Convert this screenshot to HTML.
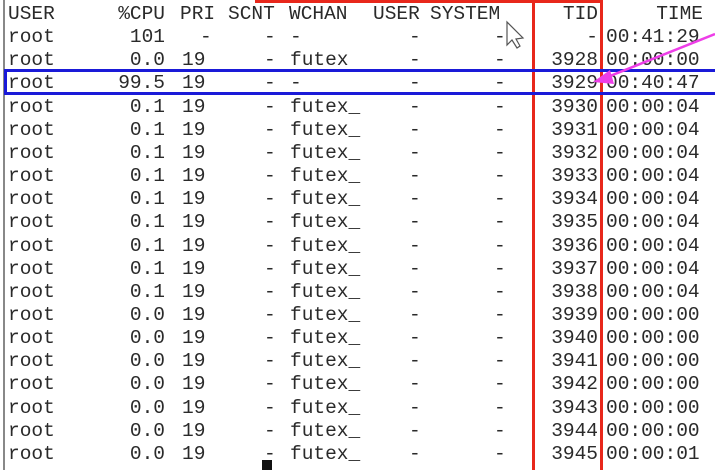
<!DOCTYPE html>
<html><head><meta charset="utf-8"><style>
body{margin:0;width:715px;height:470px;background:#fff;overflow:hidden;position:relative;font-family:"Liberation Mono",monospace;font-size:19.5px;color:#2a2a2a}
.r{position:absolute;left:0;height:23px;width:715px}
.r span{position:absolute;top:0;line-height:23px;white-space:pre}
.a{text-align:right}
</style></head><body>
<div style="position:absolute;left:3px;top:0;width:2px;height:470px;background:#888"></div>
<div id="rows"></div>
<script>
const rows=[["USER","%CPU","PRI","SCNT","WCHAN","USER","SYSTEM","TID","TIME"],
["root","101","-","-","-","-","-","-","00:41:29"],
["root","0.0","19","-","futex","-","-","3928","00:00:00"],
["root","99.5","19","-","-","-","-","3929","00:40:47"]];
for(let i=3930;i<=3945;i++){rows.push(["root",i<=3938?"0.1":"0.0","19","-","futex_","-","-",String(i),i==3945?"00:00:01":(i<=3938?"00:00:04":"00:00:00")]);}
let h="";
rows.forEach((r,k)=>{const y=3+k*23.15;const hd=k==0;
h+=`<div class="r" style="top:${y}px">
<span style="left:8px">${r[0]}</span>
<span class="a" style="right:${715-165}px">${r[1]}</span>
<span style="left:${hd?180:(r[2]=="-"?200:182)}px">${r[2]}</span>
<span style="left:${hd?228:264}px">${r[3]}</span>
<span style="left:${hd?289:290}px">${r[4]}</span>
<span style="left:${hd?373:409}px">${r[5]}</span>
<span style="left:${hd?430:494}px">${r[6]}</span>
<span class="a" style="right:${715-598}px">${r[7]}</span>
<span ${hd?'class="a" style="right:12px"':'style="left:606px"'}>${r[8]}</span></div>`;});
document.getElementById("rows").innerHTML=h;
</script>
<div style="position:absolute;left:262px;top:460px;width:10px;height:10px;background:#111"></div>
<div style="position:absolute;left:255px;top:0;width:347px;height:3px;background:#e8271b"></div>
<div style="position:absolute;left:532px;top:0;width:3px;height:470px;background:#e8271b"></div>
<div style="position:absolute;left:600px;top:0;width:3px;height:470px;background:#e8271b"></div>
<div style="position:absolute;left:4px;top:69px;width:715px;height:20px;border:3px solid #1a1ad8;border-right:none"></div>
<svg style="position:absolute;left:0;top:0" width="715" height="470">
<line x1="715" y1="34" x2="605" y2="78" stroke="#ee3ee8" stroke-width="2.5"/>
<polygon points="593,82 610,70 614,84" fill="#ee3ee8"/>
<path d="M507 22 L507 45 L512 40 L517 48 L520 46 L516 39 L523 38 Z" fill="#fff" stroke="#555" stroke-width="1.2"/>
</svg>
</body></html>
